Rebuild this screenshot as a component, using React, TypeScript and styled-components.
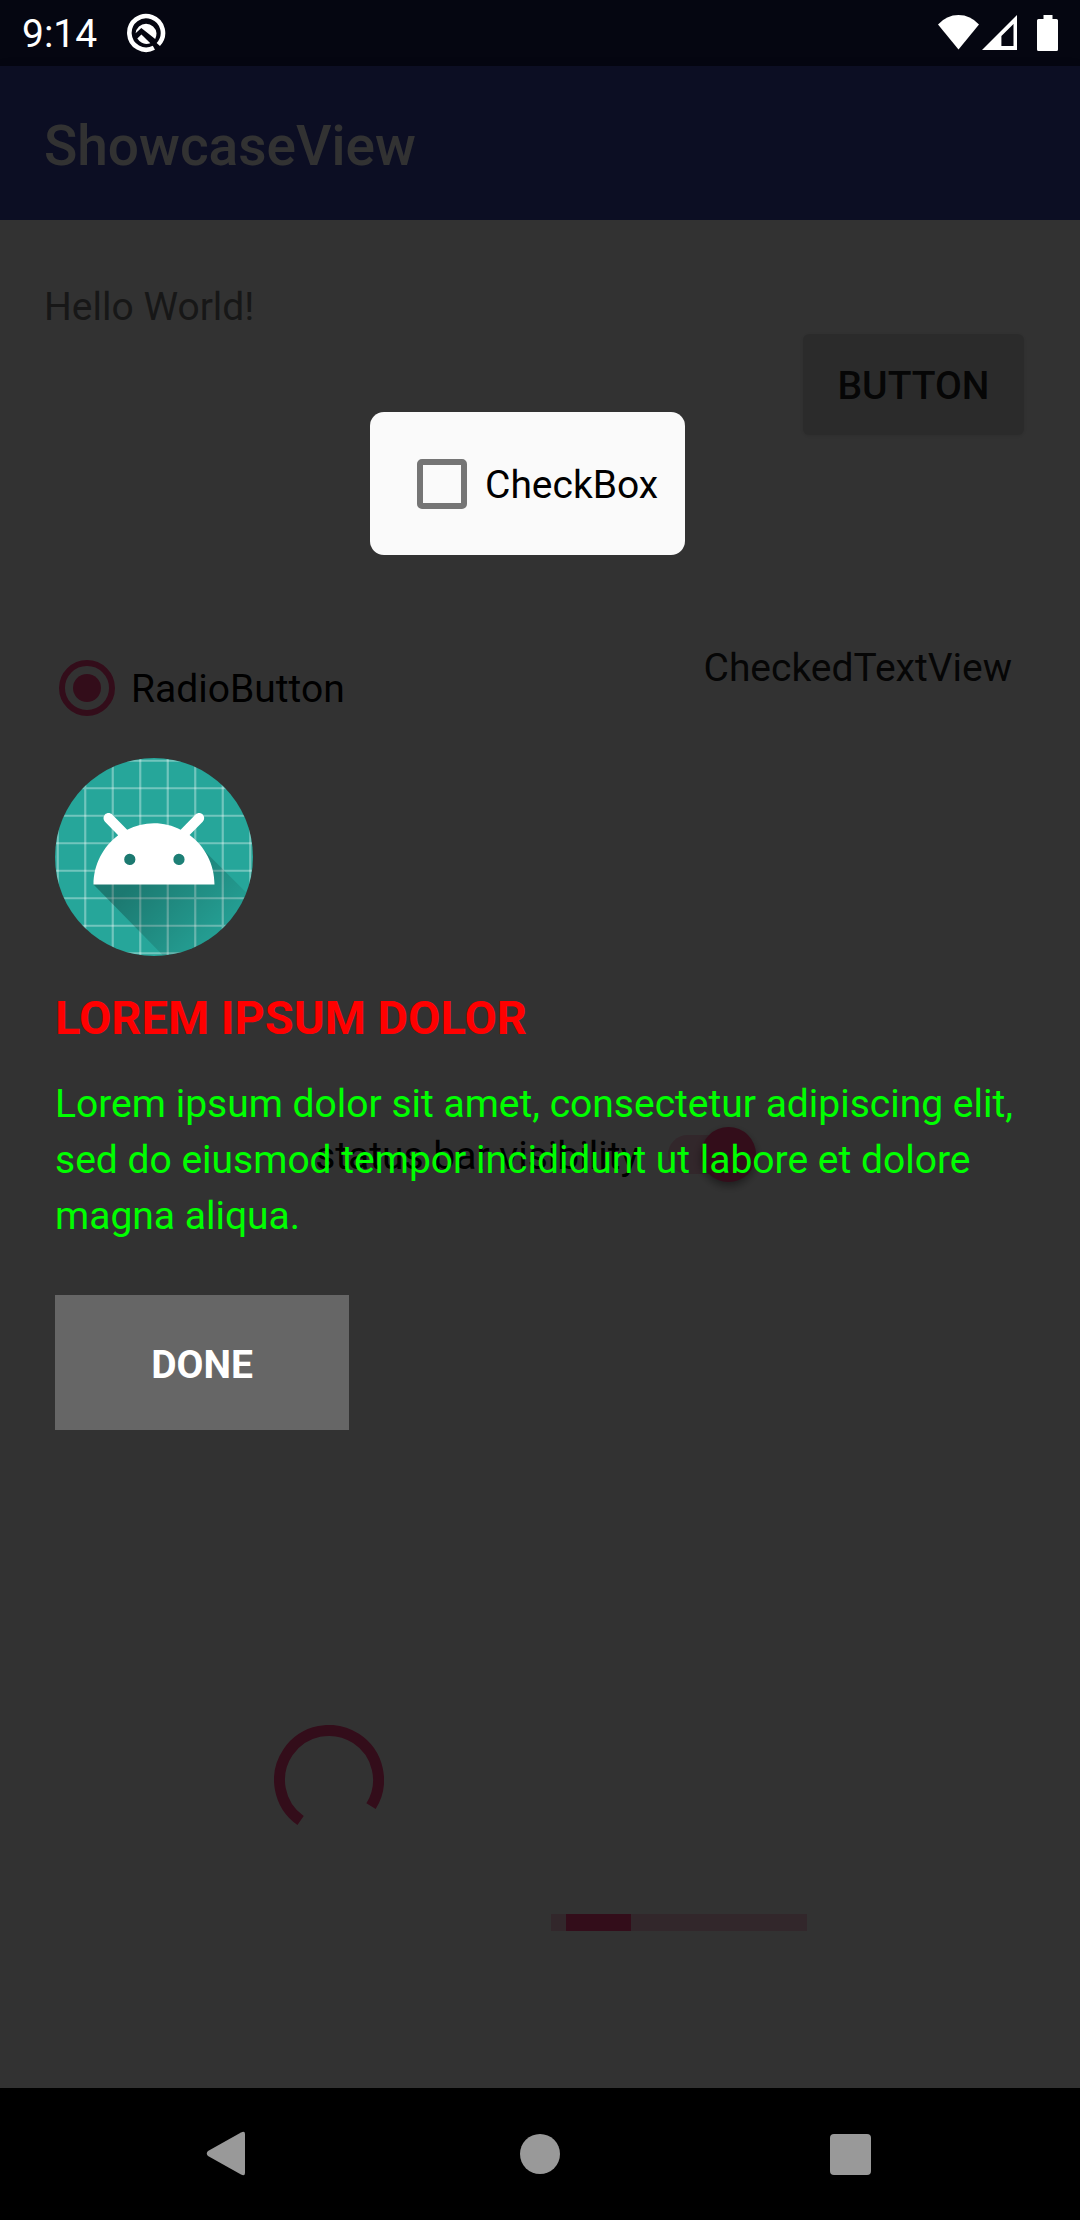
import React, { useState } from "react";
import styled, { createGlobalStyle } from "styled-components";

const accent = "#ff4081";

const GlobalStyle = createGlobalStyle`
  * {
    box-sizing: border-box;
  }
  body {
    margin: 0;
    background: #000;
    font-family: Roboto, "Noto Sans", sans-serif;
    font-size: 39px;
    line-height: 54px;
    color: #000;
  }
`;

const Screen = styled.div`
  display: flex;
  flex-direction: column;
  min-height: 100vh;
`;

const StatusBar = styled.header`
  display: flex;
  align-items: center;
  height: 66px;
  padding: 0 22px;
  background: #050611;
  color: #fff;
`;

const Clock = styled.time`
  padding-top: 2px;
  margin-right: 29px;
`;

const StatusIcons = styled.div`
  display: flex;
  align-items: center;
  margin-left: auto;
`;

const Stage = styled.div`
  position: relative;
  flex: 1;
  display: flex;
  flex-direction: column;
`;

const AppBar = styled.div`
  display: flex;
  align-items: center;
  height: 154px;
  padding: 0 44px;
  background: #3f47b0;
  box-shadow: 0 4px 12px rgba(0, 0, 0, 0.2);
`;

const AppTitle = styled.h1`
  margin: 0;
  padding-top: 6px;
  font-size: 55px;
  font-weight: 500;
  line-height: 64px;
  color: #fafafa;
`;

const Content = styled.main`
  flex: 1;
  padding: 0 44px 156px;
  background: #fafafa;
`;

const TopRow = styled.div`
  display: flex;
  align-items: flex-start;
`;

const Greeting = styled.p`
  flex: 0 0 326px;
  margin: 60px 0 0;
  color: #757575;
`;

const SpotlightCard = styled.label`
  position: relative;
  z-index: 2;
  display: flex;
  align-items: center;
  gap: 18px;
  width: 315px;
  height: 143px;
  margin-top: 192px;
  padding-left: 47px;
  border-radius: 14px;
  background: #fafafa;
`;

const ChoiceText = styled.span`
  padding-top: 3px;
`;

const RaisedButton = styled.button`
  width: 221px;
  height: 101px;
  margin: 114px 12px 0 auto;
  padding: 2px 0 0;
  border: 0;
  border-radius: 6px;
  background: #d6d7d7;
  box-shadow: 0 1px 5px rgba(0, 0, 0, 0.12);
  font: inherit;
  font-weight: 500;
  color: #212121;
`;

const CheckBoxInput = styled.input`
  appearance: none;
  width: 50px;
  height: 50px;
  margin: 0;
  border: 6px solid #757575;
  border-radius: 5px;

  &:checked {
    border-color: ${accent};
    background: ${accent};
  }
`;

const ChoiceRow = styled.div`
  display: flex;
  align-items: flex-start;
  justify-content: space-between;
  margin-top: 86px;
  padding: 0 24px 0 15px;
`;

const RadioLabel = styled.label`
  display: flex;
  align-items: center;
  gap: 16px;
  margin-top: 18px;
`;

const RadioInput = styled.input`
  appearance: none;
  width: 56px;
  height: 56px;
  margin: 0;
  padding: 8px;
  border: 6px solid ${accent};
  border-radius: 50%;
  background: ${accent} content-box;
`;

const CheckedText = styled.span`
  color: #212121;
`;

const SwitchRow = styled.label`
  display: flex;
  align-items: center;
  justify-content: center;
  gap: 29px;
  margin-top: 410px;
`;

const SwitchInput = styled.input`
  appearance: none;
  position: relative;
  width: 88px;
  height: 39px;
  margin: 0 9px 0 0;
  border-radius: 20px;
  background: rgba(255, 64, 129, 0.3);

  &::before {
    content: "";
    position: absolute;
    top: -8px;
    left: 0;
    width: 55px;
    height: 55px;
    border-radius: 50%;
    background: #f1f1f1;
    box-shadow: 0 4px 8px rgba(0, 0, 0, 0.4);
  }

  &:checked::before {
    left: 33px;
    background: ${accent};
  }
`;

const Spinner = styled.svg`
  display: block;
  width: 110px;
  height: 110px;
  margin: 542px 0 0 230px;
`;

const ProgressTrack = styled.div`
  width: 256px;
  height: 17px;
  margin: 79px 0 0 507px;
  padding: 0 0 0 15px;
  background: rgba(255, 64, 129, 0.3);
`;

const ProgressFill = styled.div`
  width: 65px;
  height: 100%;
  background: ${accent};
`;

const Showcase = styled.section`
  position: absolute;
  inset: 0;
  z-index: 1;
  display: flex;
  flex-direction: column;
  align-items: flex-start;
  padding: 692px 44px 0 55px;
  background: rgba(0, 0, 0, 0.8);
`;

const Logo = styled.svg`
  width: 198px;
  height: 198px;
`;

const ShowcaseTitle = styled.h2`
  margin: 30px 0 26px;
  font-size: 47px;
  font-weight: 700;
  line-height: 64px;
  color: #f00;
`;

const ShowcaseText = styled.p`
  margin: 0 0 51px;
  line-height: 56px;
  color: #0f0;
`;

const DoneButton = styled.button`
  width: 294px;
  height: 135px;
  padding: 4px 0 0;
  border: 0;
  background: #666;
  font: inherit;
  font-weight: 700;
  color: #fff;
`;

const NavBar = styled.nav`
  display: flex;
  align-items: center;
  justify-content: center;
  gap: 200px;
  height: 132px;
  background: #000;
`;

const NavButton = styled.button`
  display: flex;
  width: 110px;
  height: 110px;
  padding: 0;
  border: 0;
  background: none;
  color: #999;
`;

const gridLines = [19, 29, 39, 49, 59, 69, 79, 89];

function LauncherLogo() {
  return (
    <Logo viewBox="18 18 72 72" role="img" aria-label="App icon">
      <defs>
        <clipPath id="round">
          <circle cx="54" cy="54" r="36" />
        </clipPath>
        <linearGradient
          id="shade"
          gradientUnits="userSpaceOnUse"
          x1="48.77"
          y1="61.09"
          x2="78.59"
          y2="90.92"
        >
          <stop offset="0" stopColor="#000" stopOpacity="0.27" />
          <stop offset="1" stopColor="#000" stopOpacity="0" />
        </linearGradient>
      </defs>
      <g clipPath="url(#round)">
        <rect x="18" y="18" width="72" height="72" fill="#26a69a" />
        <g stroke="#fff" strokeOpacity="0.35" strokeWidth="0.8">
          {gridLines.map((n) => (
            <path key={n} d={`M${n} 18V90M18 ${n}H90`} />
          ))}
        </g>
        <path
          fill="url(#shade)"
          d="M32 64s6.4-11 12.1-13.1c7.2-2.6 26-1.4 26-1.4l38.1 38.1L107 108.9l-32-1z"
        />
        <path
          fill="#fff"
          fillRule="evenodd"
          d="M66.94 46.02C72.44 50.07 76 56.61 76 64H32c0-7.39 3.56-13.89 8.98-17.94l-4.8-4.87c-.73-.74-.73-1.89 0-2.63.73-.75 1.87-.75 2.6 0l5.47 5.49c2.93-1.48 6.23-2.34 9.75-2.34 3.48 0 6.78.86 9.68 2.34l5.43-5.49c.73-.75 1.87-.75 2.6 0 .73.74.73 1.89 0 2.63zM62.94 56.92a2.04 2.04 0 1 0 0-4.07 2.04 2.04 0 0 0 0 4.07zM45.06 56.92a2.04 2.04 0 1 0 0-4.07 2.04 2.04 0 0 0 0 4.07z"
        />
      </g>
    </Logo>
  );
}

export default function App() {
  const [checked, setChecked] = useState(false);
  const [visible, setVisible] = useState(true);

  return (
    <>
      <GlobalStyle />
      <Screen>
        <StatusBar>
          <Clock>9:14</Clock>
          <svg width="40" height="40" viewBox="0 0 40 40" aria-hidden="true">
            <path
              d="M32.3 31.5A16.8 16.8 0 1 0 27.9 34.8"
              fill="none"
              stroke="#fff"
              strokeWidth="4.6"
            />
            <path
              d="M9.6 20.3A10.5 10.5 0 0 1 30.5 20.3Q30.5 23.6 29.2 26L15.3 14.9Z"
              fill="#fff"
            />
            <path d="M11.3 25.6L15.4 21.4L24.4 30.2Q16.5 33 11.3 25.6Z" fill="#fff" />
          </svg>
          <StatusIcons>
            <svg width="120" height="40" viewBox="0 0 120 40" aria-hidden="true" fill="#fff">
              <path d="M0 11.5Q8.5 2 20.5 2T41 11.5L20.5 36.5Z" />
              <path
                fillRule="evenodd"
                d="M44 37L79 2V37ZM63.4 33H75.5V11L63.4 23Z"
              />
              <path d="M105.5 2H114.5V6H118.5Q120 6 120 7.5V36.5Q120 38 118.5 38H100.5Q99 38 99 36.5V7.5Q99 6 100.5 6H105.5Z" />
            </svg>
          </StatusIcons>
        </StatusBar>

        <Stage>
          <AppBar>
            <AppTitle>ShowcaseView</AppTitle>
          </AppBar>
          <Content>
            <TopRow>
              <Greeting>Hello World!</Greeting>
              <SpotlightCard>
                <CheckBoxInput
                  type="checkbox"
                  checked={checked}
                  onChange={(e) => setChecked(e.target.checked)}
                />
                <ChoiceText>CheckBox</ChoiceText>
              </SpotlightCard>
              <RaisedButton type="button">BUTTON</RaisedButton>
            </TopRow>
            <ChoiceRow>
              <RadioLabel>
                <RadioInput type="radio" name="choice" defaultChecked />
                <ChoiceText>RadioButton</ChoiceText>
              </RadioLabel>
              <CheckedText>CheckedTextView</CheckedText>
            </ChoiceRow>
            <SwitchRow>
              <ChoiceText>status bar visibility</ChoiceText>
              <SwitchInput
                type="checkbox"
                role="switch"
                checked={visible}
                onChange={(e) => setVisible(e.target.checked)}
              />
            </SwitchRow>
            <Spinner viewBox="0 0 110 110" role="img" aria-label="Loading">
              <path
                d="M26.6 95.5A49.5 49.5 0 1 1 97 81.2"
                fill="none"
                stroke={accent}
                strokeWidth="11"
              />
            </Spinner>
            <ProgressTrack role="progressbar" aria-label="Progress">
              <ProgressFill />
            </ProgressTrack>
          </Content>

          <Showcase>
            <LauncherLogo />
            <ShowcaseTitle>LOREM IPSUM DOLOR</ShowcaseTitle>
            <ShowcaseText>
              Lorem ipsum dolor sit amet, consectetur adipiscing elit, sed do
              eiusmod tempor incididunt ut labore et dolore magna aliqua.
            </ShowcaseText>
            <DoneButton type="button">DONE</DoneButton>
          </Showcase>
        </Stage>

        <NavBar>
          <NavButton type="button" aria-label="Back">
            <svg viewBox="0 0 110 110" fill="currentColor" aria-hidden="true">
              <path d="M33 52L66 33.5Q70 31.5 70 35V74Q70 77.5 66 75.5L33 57Q30.5 54.5 33 52Z" />
            </svg>
          </NavButton>
          <NavButton type="button" aria-label="Home">
            <svg viewBox="0 0 110 110" fill="currentColor" aria-hidden="true">
              <circle cx="55" cy="55" r="20" />
            </svg>
          </NavButton>
          <NavButton type="button" aria-label="Recent apps">
            <svg viewBox="0 0 110 110" fill="currentColor" aria-hidden="true">
              <rect x="35" y="35" width="41" height="41" rx="4" />
            </svg>
          </NavButton>
        </NavBar>
      </Screen>
    </>
  );
}
